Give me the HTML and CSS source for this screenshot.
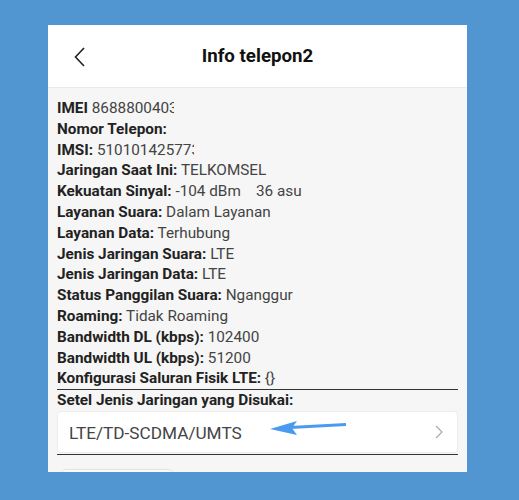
FILE: index.html
```html
<!DOCTYPE html>
<html lang="id">
<head>
    <meta charset="UTF-8">
    <meta name="viewport" content="width=device-width, initial-scale=1.0">
    <title>Info telepon2</title>
    <link rel="stylesheet" href="styles.css">
</head>
<body>
    <div class="phone">
        <div class="header">
            <svg class="back" width="12" height="20" viewBox="0 0 12 20">
                <path d="M10 1 L1.5 10 L10 19" fill="none" stroke="#222" stroke-width="1.6"/>
            </svg>
            <h1>Info telepon2</h1>
            <span></span>
        </div>

        <div class="content">
            <div class="row"><b>IMEI</b> <span class="cut imei">8688800403</span></div>
            <div class="row"><b>Nomor Telepon:</b></div>
            <div class="row"><b>IMSI:</b> <span class="cut imsi">510101425773</span></div>
            <div class="row"><b>Jaringan Saat Ini:</b> TELKOMSEL</div>
            <div class="row"><b>Kekuatan Sinyal:</b> -104 dBm &nbsp;&nbsp; 36 asu</div>
            <div class="row"><b>Layanan Suara:</b> Dalam Layanan</div>
            <div class="row"><b>Layanan Data:</b> Terhubung</div>
            <div class="row"><b>Jenis Jaringan Suara:</b> LTE</div>
            <div class="row"><b>Jenis Jaringan Data:</b> LTE</div>
            <div class="row"><b>Status Panggilan Suara:</b> Nganggur</div>
            <div class="row"><b>Roaming:</b> Tidak Roaming</div>
            <div class="row"><b>Bandwidth DL (kbps):</b> 102400</div>
            <div class="row"><b>Bandwidth UL (kbps):</b> 51200</div>
            <div class="row line"><b>Konfigurasi Saluran Fisik LTE:</b> {}</div>
            <div class="row"><b>Setel Jenis Jaringan yang Disukai:</b></div>

            <div class="select">
                <span>LTE/TD-SCDMA/UMTS</span>
                <svg class="arrow" width="80" height="16" viewBox="0 0 80 16">
                    <path d="M76 4.5 L20 7.5" stroke="#4a9af0" stroke-width="3" fill="none"/>
                    <path d="M0 9 L27 1 L22 8 L27 15 Z" fill="#4a9af0"/>
                </svg>
                <svg class="chev" width="8" height="14" viewBox="0 0 8 14">
                    <path d="M1 1 L7 7 L1 13" fill="none" stroke="#aaa" stroke-width="1.2"/>
                </svg>
            </div>
            <div class="rule"></div>
            <div class="next-btn"></div>
        </div>
    </div>
</body>
</html>
```

FILE: styles.css
```css
body {
    margin: 0;
    background-color: #5196d1;
    font-family: Roboto, "Liberation Sans", sans-serif;
    padding: 25px 0 0 48px;
    height: 500px;
    box-sizing: border-box;
    overflow: hidden;
}
.phone {
    width: 419px;
    height: 447px;
    background-color: #f6f6f6;
    overflow: hidden;
}
.header {
    height: 62px;
    background-color: white;
    border-bottom: 1px solid #ebebeb;
    display: grid;
    grid-template-columns: 60px 1fr 60px;
    align-items: center;
}
.header .back {
    margin-left: 26px;
    margin-top: 1px;
}
.header h1 {
    margin: 0;
    text-align: center;
    font-size: 18.7px;
    font-weight: bold;
    color: #111;
}
.content {
    padding: 10px 9px 0 9px;
}
.row {
    font-size: 15.3px;
    line-height: 20.8px;
    color: #444;
    white-space: nowrap;
}
.row b {
    color: #222;
}
.row.line {
    border-bottom: 1.5px solid #333;
}
.cut {
    display: inline-block;
    overflow: hidden;
    vertical-align: top;
}
.imei {
    width: 82px;
}
.imsi {
    width: 97px;
}
.select {
    height: 42px;
    background-color: white;
    border: 1px solid #ececec;
    border-radius: 4px;
    box-sizing: border-box;
    display: flex;
    align-items: center;
    padding: 0 14px 0 11px;
    position: relative;
    font-size: 17.2px;
    color: #444;
}
.select span {
    flex: 1;
    margin-top: 2px;
}
.select .arrow {
    position: absolute;
    left: 212px;
    top: 8px;
}
.rule {
    margin-top: 1px;
    border-top: 1.5px solid #333;
}
.next-btn {
    margin: 14px 0 0 3px;
    width: 112px;
    height: 30px;
    border: 1px solid #e4e4e4;
    border-radius: 6px;
    background-color: #f9f9f9;
}
```
